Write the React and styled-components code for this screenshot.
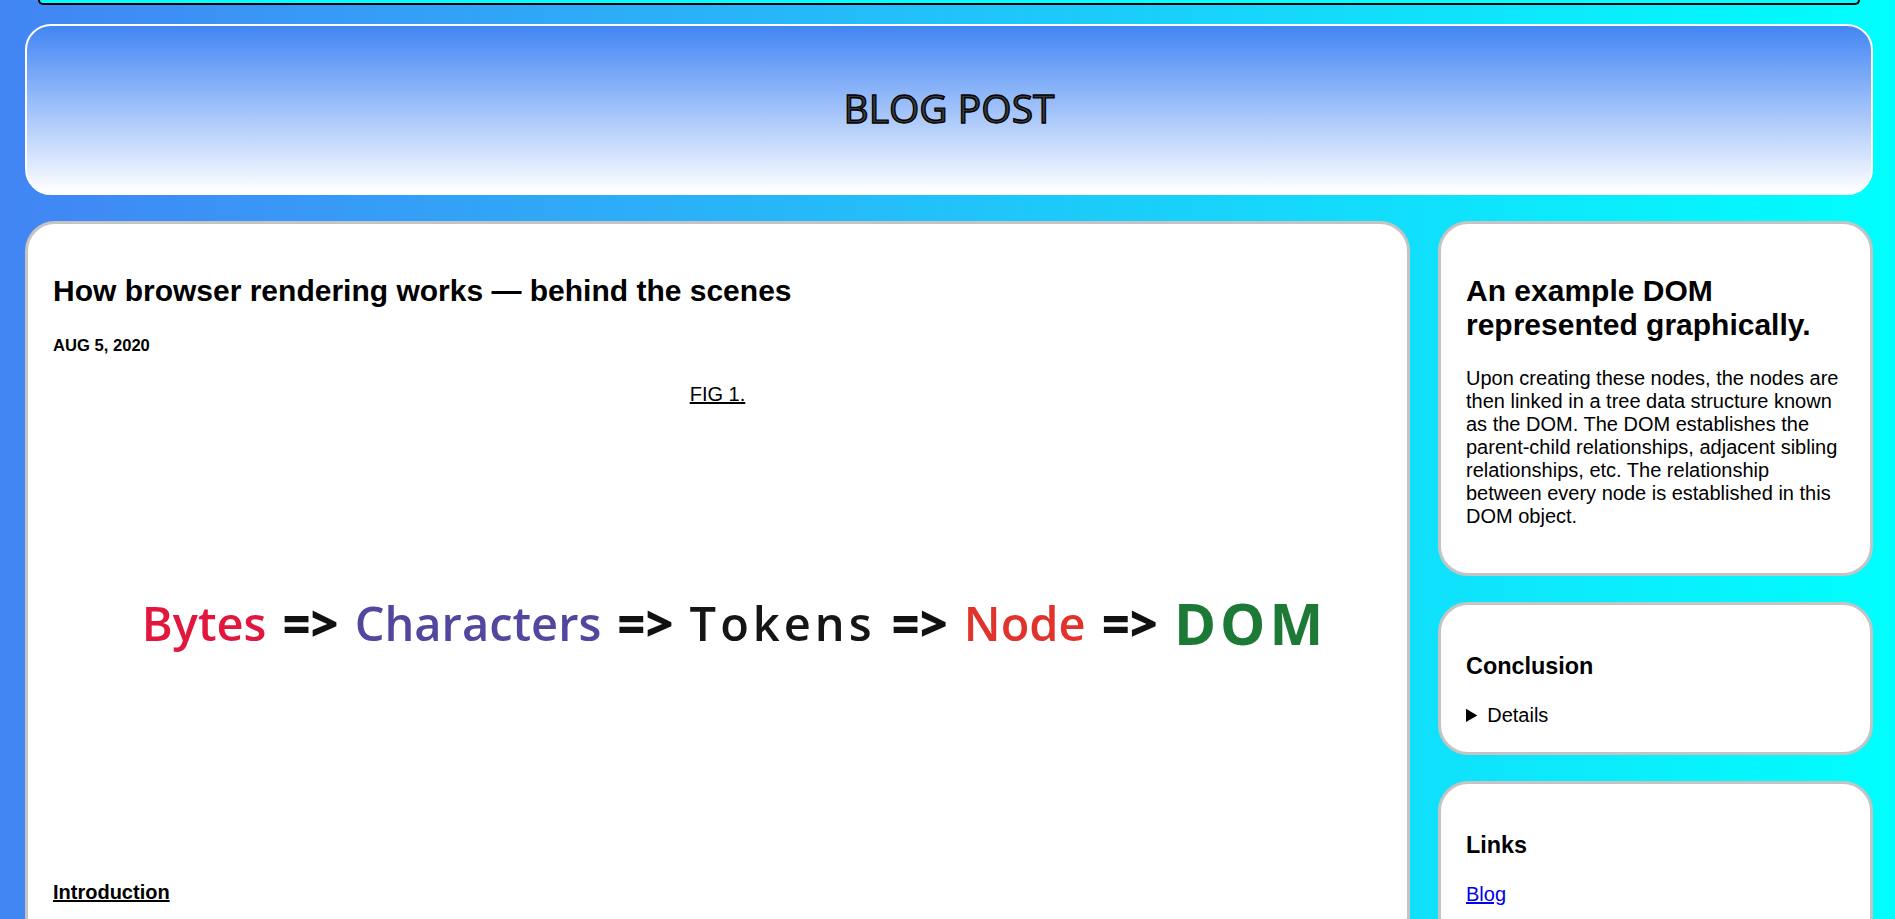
import React from 'react';
import styled, { createGlobalStyle } from 'styled-components';

const GlobalStyle = createGlobalStyle`
    html, body {
        margin: 0;
        padding: 0;
    }
    body {
        min-height: 100vh;
        background: linear-gradient(to right, #4285f4, #00ffff);
        font-family: "Liberation Sans", Arial, sans-serif;
        font-size: 20px;
        color: #000;
    }
`;

const Page = styled.div`
    padding: 0 22px 40px 25px;
`;

const TopBar = styled.nav`
    height: 3px;
    margin: 0 13px 0 13px;
    background: #00ffff;
    border: 2px solid #000;
    border-top: none;
    border-radius: 0 0 18px 18px;
`;

const Header = styled.header`
    margin-top: 19px;
    height: 167px;
    display: flex;
    align-items: center;
    justify-content: center;
    background: linear-gradient(to bottom, #4285f4, #ffffff);
    border: 2px solid #fff;
    border-radius: 26px;
`;

const HeaderTitle = styled.h1`
    margin: 0 0 4px;
    font-family: "Open Sans", sans-serif;
    font-size: 39px;
    font-weight: 400;
    color: #3a3a3a;
    -webkit-text-stroke: 1.3px #000;
`;

const Layout = styled.div`
    margin-top: 26px;
    display: grid;
    grid-template-columns: 1fr 435px;
    gap: 28px;
    align-items: start;
`;

const Card = styled.section`
    background: #fff;
    border: 3px solid #c4c4c4;
    border-radius: 30px;
    padding: 25px;
`;

const Title = styled.h2`
    margin: 25px 0;
    font-size: 30px;
    font-weight: 700;
`;

const Date = styled.h5`
    margin: 27.7px 0;
    font-size: 16.6px;
    font-weight: 700;
`;

const Caption = styled.p`
    margin: 0;
    text-align: center;
    text-decoration: underline;
`;

const Figure = styled.div`
    height: 448px;
    display: flex;
    align-items: center;
    justify-content: center;
    gap: 16px;
    padding: 0 0 14px 34px;
    box-sizing: border-box;
    font-family: "Open Sans", sans-serif;
    background: #fff;
`;

const Word = styled.span`
    color: ${p => p.color || '#151515'};
    font-size: ${p => p.size || 47}px;
    font-weight: ${p => p.weight || 600};
    letter-spacing: ${p => p.spacing || 0}px;
    filter: blur(0.4px);
    line-height: 1;
`;

const Arrow = styled(Word)`
    font-weight: 800;
    color: #111;
`;

const SectionHeading = styled.h4`
    margin: 26.6px 0;
    font-size: 20px;
    font-weight: 700;
    text-decoration: underline;
`;

const Text = styled.p`
    margin: 20px 0;
    font-size: 20px;
    line-height: normal;
`;

const Sidebar = styled.aside`
    display: flex;
    flex-direction: column;
    gap: 26px;
`;

const SideHeading = styled.h3`
    margin: 23.4px 0;
    font-size: 23.4px;
    font-weight: 700;
`;

const Details = styled.details`
    font-size: 20px;
`;

const Link = styled.a`
    color: #0000ee;
    text-decoration: underline;
`;

export default function App() {
    return (
        <>
            <GlobalStyle />
            <Page>
                <TopBar />
                <Header>
                    <HeaderTitle>BLOG POST</HeaderTitle>
                </Header>
                <Layout>
                    <Card as="article">
                        <Title>How browser rendering works — behind the scenes</Title>
                        <Date>AUG 5, 2020</Date>
                        <Caption>FIG 1.</Caption>
                        <Figure>
                            <Word color="#e2173e">Bytes</Word>
                            <Arrow size={48}>=&gt;</Arrow>
                            <Word color="#51479e">Characters</Word>
                            <Arrow size={48}>=&gt;</Arrow>
                            <Word spacing={4}>Tokens</Word>
                            <Arrow size={48}>=&gt;</Arrow>
                            <Word color="#e1332b">Node</Word>
                            <Arrow size={48}>=&gt;</Arrow>
                            <Word color="#1d7a36" size={57} weight={700} spacing={4}>DOM</Word>
                        </Figure>
                        <SectionHeading>Introduction</SectionHeading>
                        <Text>
                            When a web page is loaded, the browser reads the HTML text and builds the
                            DOM tree from it. Then it processes the CSS and builds the CSSOM tree.
                        </Text>
                    </Card>
                    <Sidebar>
                        <Card>
                            <Title>An example DOM represented graphically.</Title>
                            <Text>
                                Upon creating these nodes, the nodes are then linked in a tree data
                                structure known as the DOM. The DOM establishes the parent-child
                                relationships, adjacent sibling relationships, etc. The relationship
                                between every node is established in this DOM object.
                            </Text>
                        </Card>
                        <Card>
                            <SideHeading>Conclusion</SideHeading>
                            <Details>
                                <summary>Details</summary>
                                The DOM and CSSOM are combined into the render tree.
                            </Details>
                        </Card>
                        <Card>
                            <SideHeading>Links</SideHeading>
                            <Text>
                                <Link href="#">Blog</Link>
                            </Text>
                        </Card>
                    </Sidebar>
                </Layout>
            </Page>
        </>
    );
}
